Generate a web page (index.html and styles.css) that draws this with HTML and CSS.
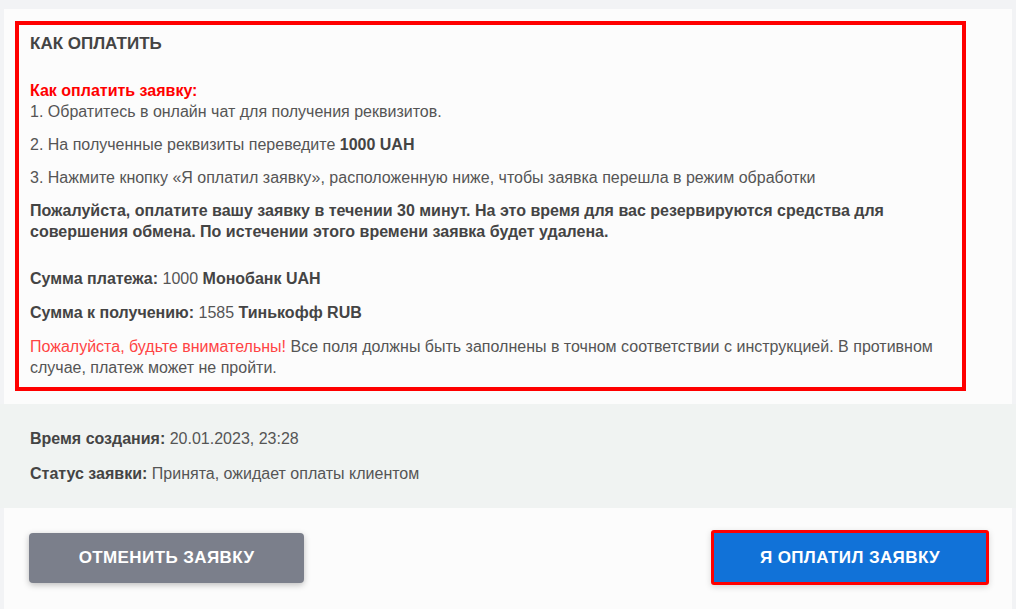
FILE: index.html
```html
<!DOCTYPE html>
<html lang="ru">
<head>
    <meta charset="UTF-8">
    <meta name="viewport" content="width=device-width, initial-scale=1.0">
    <title>Оплата заявки</title>
    <link rel="stylesheet" href="styles.css">
</head>
<body>
    <div class="panel">
        <div class="howto">
            <h3>КАК ОПЛАТИТЬ</h3>
            <p><span class="red-title">Как оплатить заявку:</span><br>1. Обратитесь в онлайн чат для получения реквизитов.</p>
            <p>2. На полученные реквизиты переведите <strong>1000 UAH</strong></p>
            <p>3. Нажмите кнопку «Я оплатил заявку», расположенную ниже, чтобы заявка перешла в режим обработки</p>
            <p class="notice"><strong>Пожалуйста, оплатите вашу заявку в течении 30 минут. На это время для вас резервируются средства для совершения обмена. По истечении этого времени заявка будет удалена.</strong></p>
            <p class="sum"><strong>Сумма платежа:</strong> 1000 <strong>Монобанк UAH</strong></p>
            <p class="sum"><strong>Сумма к получению:</strong> 1585 <strong>Тинькофф RUB</strong></p>
            <p><span class="warn">Пожалуйста, будьте внимательны!</span> Все поля должны быть заполнены в точном соответствии с инструкцией. В противном случае, платеж может не пройти.</p>
        </div>
    </div>

    <div class="info">
        <p><strong>Время создания:</strong> 20.01.2023, 23:28</p>
        <p><strong>Статус заявки:</strong> Принята, ожидает оплаты клиентом</p>
    </div>

    <div class="actions">
        <button class="btn btn-cancel">Отменить заявку</button>
        <button class="btn btn-pay">Я оплатил заявку</button>
    </div>
</body>
</html>
```

FILE: styles.css
```css
body {
    font-family: "Liberation Sans", Arial, sans-serif;
    font-size: 16px;
    line-height: 21px;
    color: #555;
    margin: 0;
    padding: 9px 0 0;
    background-color: #f2f3f5;
}
strong {
    color: #444;
}
p {
    margin: 0 0 12px;
}
.panel {
    margin: 0 4px;
    background: #fcfcfc;
    padding: 12px 46px 13px 11px;
}
.howto {
    border: 4px solid #ff0000;
    padding: 9px 11px 9px;
}
.howto h3 {
    margin: 0 0 26px;
    font-size: 17px;
    line-height: 20px;
    color: #444;
}
.howto p:last-child {
    margin-bottom: 0;
}
.red-title {
    color: #ff0000;
    font-weight: bold;
}
.notice {
    margin-bottom: 26px;
}
.howto .sum {
    margin-bottom: 13px;
}
.warn {
    color: #ff4444;
}
.info {
    background: #f0f3f2;
    padding: 24px 30px 10px;
}
.info p {
    margin-bottom: 14px;
}
.actions {
    margin: 0 4px;
    background: #fcfcfc;
    display: flex;
    justify-content: space-between;
    align-items: center;
    padding: 22px 23px 30px 25px;
}
.btn {
    font-family: "Liberation Sans", Arial, sans-serif;
    font-size: 17px;
    font-weight: bold;
    letter-spacing: 0.4px;
    text-transform: uppercase;
    color: white;
    border: none;
    border-radius: 4px;
    cursor: pointer;
}
.btn-cancel {
    width: 275px;
    height: 50px;
    background-color: #7b7f8b;
    box-shadow: 0 2px 6px rgba(0, 0, 0, 0.25);
}
.btn-pay {
    width: 278px;
    height: 55px;
    background-color: #1172d8;
    border: 3px solid #ff0000;
    border-radius: 3px;
    box-shadow: 0 2px 6px rgba(0, 0, 0, 0.15);
}
```
